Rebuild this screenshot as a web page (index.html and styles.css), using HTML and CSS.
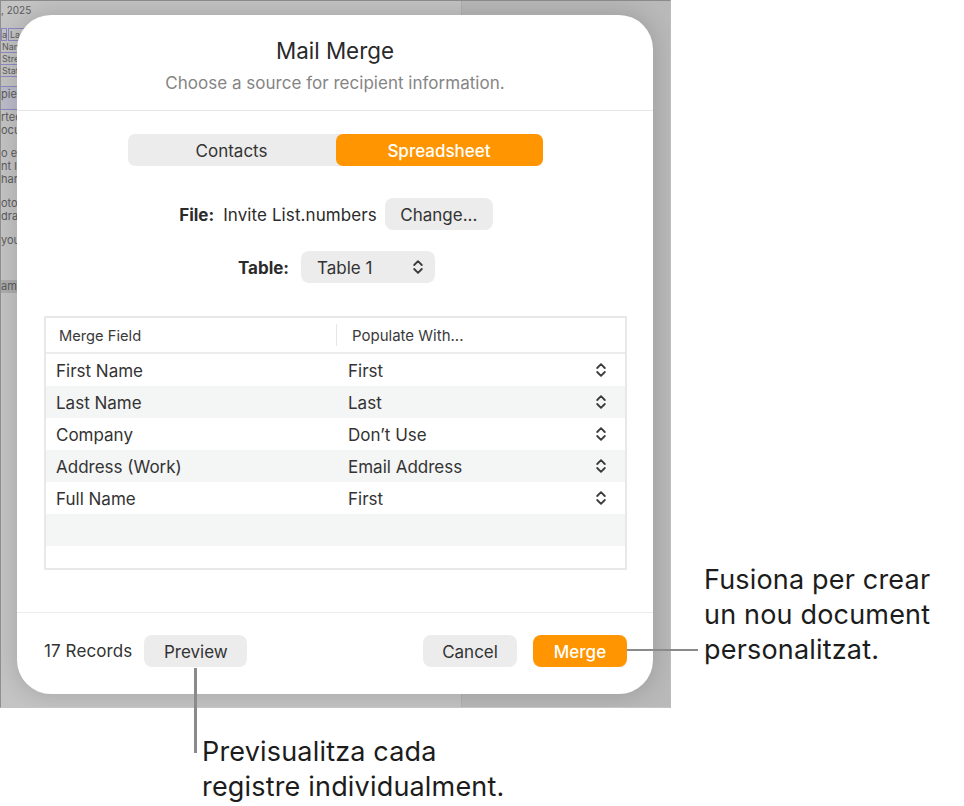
FILE: index.html
```html
<!DOCTYPE html>
<html lang="en">
<head>
<meta charset="utf-8">
<title>Mail Merge</title>
<link rel="stylesheet" href="styles.css">
</head>
<body>
<div class="stage">
  <div class="backdrop">
    <div class="doc">
      <div class="doc-date">, 2025</div>
      <div class="doc-fields">
        <div class="doc-field-row"><span class="tok tok-a">a</span><span class="tok tok-b">Last</span></div>
        <div class="tok-line">Nam</div>
        <div class="tok-line">Stre</div>
        <div class="tok-line">Stat</div>
      </div>
      <div class="doc-rec">pien</div>
      <div class="doc-para p1"><div>rted</div><div>ocun</div></div>
      <div class="doc-para p2"><div>o ed</div><div>nt lo</div><div>hang</div></div>
      <div class="doc-para p3"><div>otos</div><div>drag</div></div>
      <div class="doc-para p3"><div>your</div></div>
      <div class="doc-name">ame</div>
    </div>
    <section class="modal">
      <header class="modal-head">
        <h1 class="modal-title">Mail Merge</h1>
        <p class="modal-sub">Choose a source for recipient information.</p>
      </header>
      <div class="modal-body">
        <div class="segmented">
          <div class="seg">Contacts</div>
          <div class="seg seg-on">Spreadsheet</div>
        </div>
        <div class="file-row">
          <span class="label">File:</span>
          <span class="file-name">Invite List.numbers</span>
          <span class="btn btn-change">Change...</span>
        </div>
        <div class="table-row">
          <span class="label">Table:</span>
          <span class="btn select"><span>Table 1</span>
            <svg class="updown" viewBox="0 0 12 16"><path d="M2.2 6 6 2.2 9.8 6M2.2 10 6 13.8 9.8 10"/></svg>
          </span>
        </div>
        <div class="grid-box">
          <div class="grid-head">
            <div class="col-a">Merge Field</div>
            <div class="col-b">Populate With...</div>
          </div>
          <div class="grid-row"><span class="cell-a">First Name</span><span class="cell-b">First</span><svg class="updown" viewBox="0 0 12 16"><path d="M2.2 6 6 2.2 9.8 6M2.2 10 6 13.8 9.8 10"/></svg></div>
          <div class="grid-row alt"><span class="cell-a">Last Name</span><span class="cell-b">Last</span><svg class="updown" viewBox="0 0 12 16"><path d="M2.2 6 6 2.2 9.8 6M2.2 10 6 13.8 9.8 10"/></svg></div>
          <div class="grid-row"><span class="cell-a">Company</span><span class="cell-b">Don’t Use</span><svg class="updown" viewBox="0 0 12 16"><path d="M2.2 6 6 2.2 9.8 6M2.2 10 6 13.8 9.8 10"/></svg></div>
          <div class="grid-row alt"><span class="cell-a">Address (Work)</span><span class="cell-b">Email Address</span><svg class="updown" viewBox="0 0 12 16"><path d="M2.2 6 6 2.2 9.8 6M2.2 10 6 13.8 9.8 10"/></svg></div>
          <div class="grid-row"><span class="cell-a">Full Name</span><span class="cell-b">First</span><svg class="updown" viewBox="0 0 12 16"><path d="M2.2 6 6 2.2 9.8 6M2.2 10 6 13.8 9.8 10"/></svg></div>
          <div class="grid-row alt"></div>
          <div class="grid-row short"></div>
        </div>
      </div>
      <footer class="modal-foot">
        <span class="records">17 Records</span>
        <span class="btn btn-preview">Preview</span>
        <span class="spacer"></span>
        <span class="btn btn-cancel">Cancel</span>
        <span class="btn btn-merge">Merge</span>
      </footer>
    </section>
  </div>
  <div class="line line-v"></div>
  <div class="line line-h"></div>
  <div class="note note-preview">Previsualitza cada<br>registre individualment.</div>
  <div class="note note-merge">Fusiona per crear<br>un nou document<br>personalitzat.</div>
</div>
</body>
</html>
```

FILE: styles.css
```css
* { box-sizing: border-box; }
html, body { margin: 0; background: #fff; }
body { font-family: Inter, "Liberation Sans", sans-serif; color: #2b2b2b; }
.stage { position: relative; width: 964px; height: 806px; overflow: hidden; }
.backdrop {
  position: relative; width: 671px; height: 708px; padding: 14px 0 0 16px;
  background: #b9b9ba; overflow: hidden;
  border-top: 1px solid #8a8a8a; border-right: 1px solid #bdbdbd; border-bottom: 1px solid #c4c4c4; border-left: 1px solid #8f8f8f;
}
.doc {
  position: absolute; left: 0; top: 0; width: 461px; height: 706px;
  background: #c4c4c5; color: #5c5c5e; font-size: 11px; line-height: 13px; overflow: hidden;
  border-right: 1px solid #b0b0b0;
}
.doc-date { margin-top: 3px; font-size: 10px; }
.doc-fields { margin-top: 11px; width: 30px; }
.doc-field-row { display: flex; height: 13px; }
.tok { border: 1px solid #8d8ac4; line-height: 11px; display: block; font-size: 9px; }
.tok-a { width: 6px; }
.tok-b { width: 24px; margin-left: 1px; padding-left: 1px; font-size: 9px; }
.tok-line { border-bottom: 1px solid #8d8ac4; height: 12px; line-height: 11px; padding-left: 1px; width: 18px; font-size: 9px; }
.doc-rec { margin-top: 9px; height: 24px; width: 18px; border: 1px solid #8d8ac4; border-width: 1px 0; background: #bcbccb; line-height: 14px; }
.p1 { margin-top: 1px; }
.p2 { margin-top: 10px; }
.p3 { margin-top: 11px; }
.doc-name { margin-top: 33px; background: #adadad; height: 13px; }
.modal {
  position: relative; width: 636px; height: 679px; background: #fff; border-radius: 34px;
  display: flex; flex-direction: column;
  box-shadow: 0 0 22px 4px rgba(0, 0, 0, .13);
}
.modal-head { height: 96px; border-bottom: 1px solid #e6e6e6; text-align: center; padding-top: 23px; }
.modal-title { margin: 0; font-size: 22.4px; font-weight: 400; line-height: 26px; color: #2a2a2a; }
.modal-sub { margin: 9px 0 0; font-size: 17px; line-height: 20px; letter-spacing: .02px; color: #858585; }
.modal-body { flex: 1; padding: 23px 26px 0 27px; display: flex; flex-direction: column; align-items: center; }
.segmented { display: flex; width: 415px; height: 32px; background: #ececec; border-radius: 7px; font-size: 17px; margin-left: -1px; }
.seg { flex: 1 1 0; min-width: 0; display: flex; align-items: center; justify-content: center; padding-top: 1px; color: #333; border-radius: 7px; }
.seg-on { flex: 0 0 207px; background: #ff9500; color: #fff; font-weight: 500; }
.file-row { display: flex; align-items: center; margin-top: 32px; height: 32px; font-size: 17px; margin-left: 1px; }
.table-row { display: flex; align-items: center; margin-top: 21px; height: 32px; font-size: 17px; margin-left: 2px; }
.label { font-weight: 700; color: #2b2b2b; padding-top: 1px; }
.file-name { margin-left: 9px; letter-spacing: .09px; padding-top: 1px; }
.btn { display: flex; align-items: center; justify-content: center; height: 32px; padding-top: 1px; background: #ececec; border-radius: 8px; font-size: 17px; color: #333; }
.btn-change { width: 108px; margin-left: 8px; }
.select { width: 134px; margin-left: 12px; justify-content: space-between; padding: 1px 11px 0 16px; }
.select .updown { margin-top: -1px; }
.updown { width: 12px; height: 16px; fill: none; stroke: #3a3a3a; stroke-width: 1.8; stroke-linecap: round; stroke-linejoin: round; flex: none; }
.grid-box { align-self: stretch; margin-top: 33px; height: 254px; border: 2px solid #e8e8e8; }
.grid-head { display: flex; height: 36px; border-bottom: 2px solid #ececec; align-items: center; color: #3a3a3a; }
.col-a { width: 290px; padding-left: 13px; padding-top: 1px; font-size: 14.7px; }
.col-b { padding-left: 15px; border-left: 1px solid #e6e6e6; height: 22px; line-height: 23px; font-size: 15px; }
.grid-row { display: flex; align-items: center; height: 32px; font-size: 17px; color: #333; padding-right: 18px; }
.grid-row.alt { background: #f4f5f5; }
.grid-row.short { height: 22px; }
.cell-a { width: 302px; padding-left: 10px; padding-top: 1px; }
.cell-b { flex: 1; padding-top: 1px; }
.modal-foot { height: 82px; border-top: 1px solid #ececec; display: flex; align-items: flex-start; padding: 22px 26px 0 27px; }
.records { font-size: 17px; line-height: 33px; letter-spacing: .1px; color: #333; }
.btn-preview { width: 103px; margin-left: 12px; }
.spacer { flex: 1; }
.btn-cancel { width: 94px; }
.btn-merge { width: 94px; margin-left: 16px; background: #ff9500; color: #fff; font-weight: 500; }
.line { position: absolute; background: #8a8a8a; }
.line-v { left: 194px; top: 668px; width: 3px; height: 85px; }
.line-h { left: 627px; top: 649px; width: 71px; height: 2px; }
.note { position: absolute; font-size: 27px; letter-spacing: .18px; line-height: 35px; color: #1c1c1c; white-space: nowrap; }
.note-preview { left: 202px; top: 734px; }
.note-merge { left: 704px; top: 562px; }
```
